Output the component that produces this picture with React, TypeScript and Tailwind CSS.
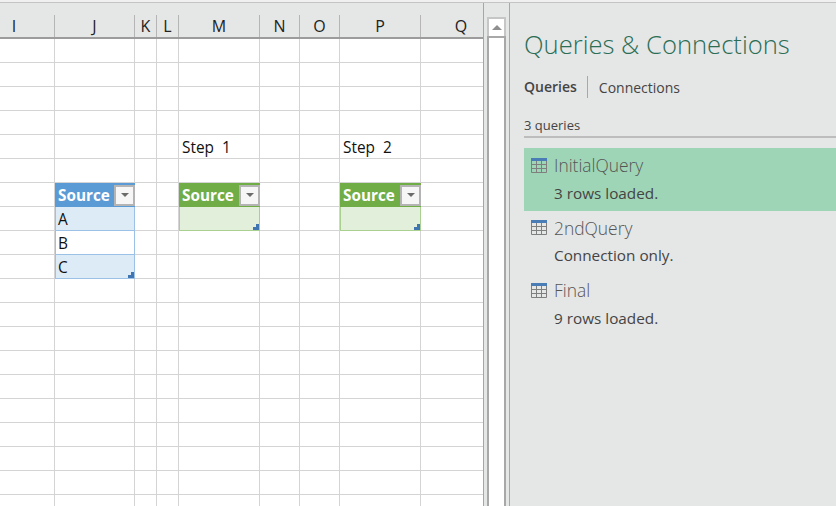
import React from 'react'

const columns = [
  { name: 'I', width: 'w-[81px]' },
  { name: 'J', width: 'w-[80px]' },
  { name: 'K', width: 'w-[22px]' },
  { name: 'L', width: 'w-[22px]' },
  { name: 'M', width: 'w-[81px]' },
  { name: 'N', width: 'w-[40px]' },
  { name: 'O', width: 'w-[40px]' },
  { name: 'P', width: 'w-[81px]' },
  { name: 'Q', width: 'w-[80px]' }
]

const ROW_COUNT = 20

const FilterButton = () => (
  <span className="flex h-[21px] w-[21px] shrink-0 items-center justify-center border-2 border-[#b4b4b4] bg-[#f6f6f6]">
    <svg width="8" height="4" viewBox="0 0 8 4">
      <path d="M0 0h8L4 4z" fill="#6b6b6b" />
    </svg>
  </span>
)

const TableHeader = ({ tone }: { tone: 'blue' | 'green' }) => (
  <div
    className={`flex h-full w-full items-center justify-between pl-[3px] text-[15.3px] font-bold text-white ${
      tone === 'blue' ? 'bg-[#5b9bd5]' : 'bg-[#70ad47]'
    }`}
  >
    <span>Source</span>
    <FilterButton />
  </div>
)

const Corner = () => (
  <svg className="absolute bottom-0 right-0" width="6" height="6" viewBox="0 0 6 6">
    <path d="M6 0v6H0V3h3V0z" fill="#3f75b0" />
  </svg>
)

const getCell = (row: number, col: string) => {
  if (row === 4 && col === 'M') return <span className="pl-[3px] pt-[3px] text-[15.4px]">Step&nbsp; 1</span>
  if (row === 4 && col === 'P') return <span className="pl-[3px] pt-[3px] text-[15.4px]">Step&nbsp; 2</span>
  if (row === 6 && col === 'J') return <TableHeader tone="blue" />
  if (row === 6 && (col === 'M' || col === 'P')) return <TableHeader tone="green" />
  if (row === 7 && col === 'J')
    return <div className="flex h-full w-full items-center border-x border-b border-[#9bc2e6] bg-[#ddebf7] pl-[2px] pt-[2px] text-[15.4px]">A</div>
  if (row === 8 && col === 'J')
    return <div className="flex h-full w-full items-center border-x border-b border-[#9bc2e6] bg-white pl-[2px] pt-[2px] text-[15.4px]">B</div>
  if (row === 9 && col === 'J')
    return (
      <div className="relative flex h-full w-full items-center border-x border-b border-[#9bc2e6] bg-[#ddebf7] pl-[2px] pt-[2px] text-[15.4px]">
        C
        <Corner />
      </div>
    )
  if (row === 7 && (col === 'M' || col === 'P'))
    return (
      <div className="relative h-full w-full border-x border-b border-[#a9d08e] bg-[#e2efda]">
        <Corner />
      </div>
    )
  return null
}

const Sheet = () => (
  <div className="w-[484px] shrink-0 overflow-hidden border-r border-[#a6a6a6]">
    <div className="-ml-[26px] flex h-[36px] items-end border-b-2 border-[#9c9c9c]">
      {columns.map((c) => (
        <div
          key={c.name}
          className={`${c.width} flex h-[22px] shrink-0 items-center justify-center border-r border-[#b5b5b5] text-[16px] leading-none text-[#222] last:border-r-0`}
        >
          {c.name}
        </div>
      ))}
    </div>
    <div className="-ml-[26px] bg-white">
      {[...Array(ROW_COUNT)].map((_, row) => (
        <div key={row} className="flex h-[24px] text-[15px] text-[#111]">
          {columns.map((c) => {
            const cell = getCell(row, c.name)
            return (
              <div
                key={c.name}
                className={`${c.width} flex shrink-0 items-center ${
                  cell && row >= 6 ? '' : 'border-b border-r border-[#d4d4d4]'
                }`}
              >
                {cell}
              </div>
            )
          })}
        </div>
      ))}
    </div>
  </div>
)

const Scrollbar = () => (
  <div className="ml-[3px] w-[19px] shrink-0">
    <div className="mt-[14px] flex h-[19px] items-center justify-center border-2 border-b-0 border-[#c6c6c6] bg-white">
      <svg width="10" height="5" viewBox="0 0 10 5">
        <path d="M0 5L5 0l5 5z" fill="#8f8f8f" />
      </svg>
    </div>
    <div className="h-[470px] border-x-2 border-t-2 border-[#a8a8a8] bg-white" />
  </div>
)

const TableIcon = () => (
  <svg className="shrink-0" width="16" height="15" viewBox="0 0 16 15">
    <rect x="0" y="0" width="16" height="3" fill="#4a7cb5" />
    <path
      d="M.5 3v11.5h15V3M5.5 3v11.5M10.5 3v11.5M.5 6.5h15M.5 10.5h15"
      fill="none"
      stroke="#7f7f7f"
    />
  </svg>
)

const queries = [
  { name: 'InitialQuery', status: '3 rows loaded.', active: true },
  { name: '2ndQuery', status: 'Connection only.', active: false },
  { name: 'Final', status: '9 rows loaded.', active: false }
]

const Panel = () => (
  <div className="min-w-0 flex-1 border-l border-[#a8a8a8] pl-[14px]">
    <h1 className="mt-[24px] whitespace-nowrap text-[25.6px] font-light leading-[36px] text-[#2a6e55]">
      Queries &amp; Connections
    </h1>
    <div className="mt-[13px] flex h-[22px] items-center text-[14px] text-[#444]">
      <span className="border-r border-[#a8a8a8] pr-[10px] font-semibold leading-[22px]">Queries</span>
      <span className="pl-[11px]">Connections</span>
    </div>
    <div className="mt-[18px] border-b-2 border-[#bdbdbd] pb-[2px] text-[13px] leading-[18px] text-[#444]">
      3 queries
    </div>
    <div className="mt-[10px]">
      {queries.map((q) => (
        <div key={q.name} className={`h-[62.5px] pl-[7px] pt-[6px] ${q.active ? 'bg-[#9fd5b7]' : ''}`}>
          <div className="flex items-center gap-[7px]">
            <TableIcon />
            <span className="text-[17.4px] font-light leading-[22px] text-[#555]">{q.name}</span>
          </div>
          <div className="mt-[6.5px] pl-[23px] text-[15.3px] leading-[20px] text-[#444]">{q.status}</div>
        </div>
      ))}
    </div>
  </div>
)

const App: React.FC = () => {
  return (
    <div className="h-[506px] w-[836px] overflow-hidden bg-[#e5e6e6] font-['Open_Sans','Noto_Sans',sans-serif]">
      <div className="h-[2px] bg-[#f0f0f0]" />
      <div className="flex h-[504px] border-t border-[#c4c4c4]">
        <Sheet />
        <Scrollbar />
        <div className="w-[3px] shrink-0" />
        <Panel />
      </div>
    </div>
  )
}

export default App
